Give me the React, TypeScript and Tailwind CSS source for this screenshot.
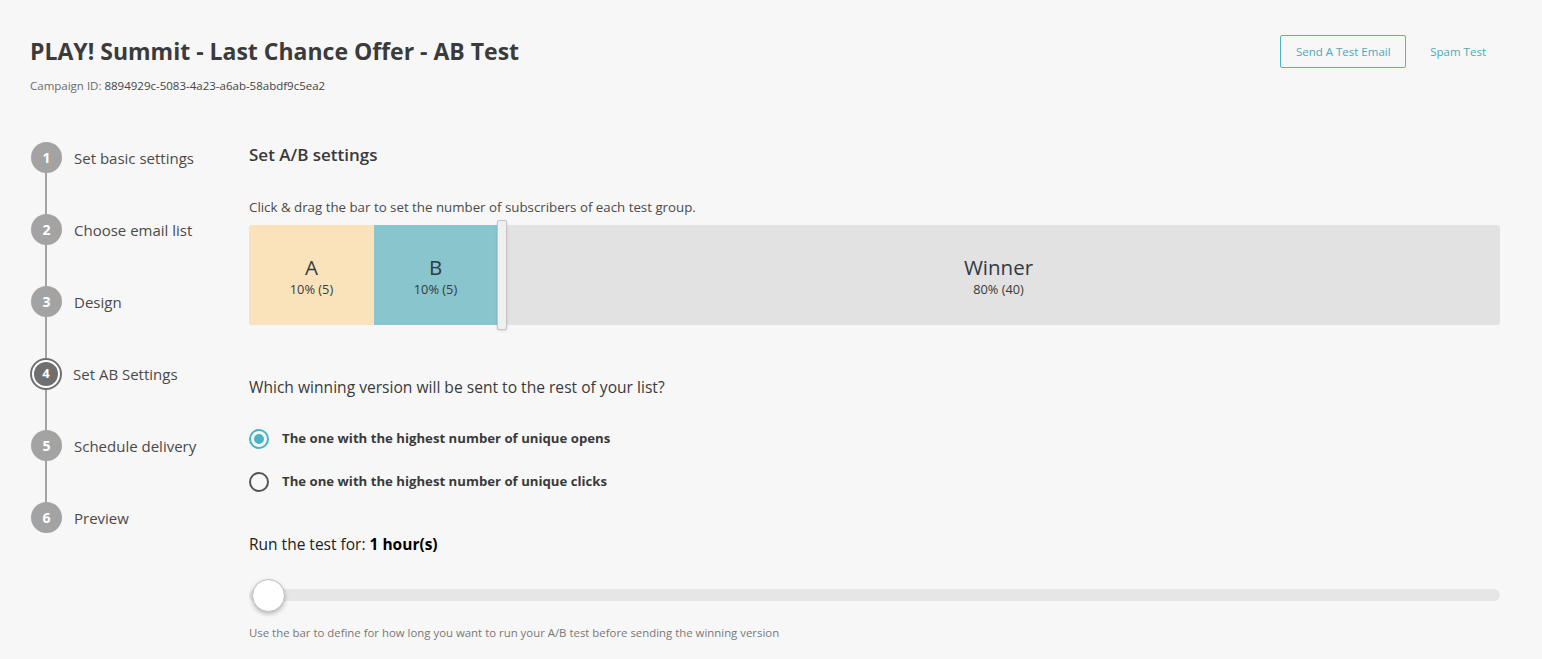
import React from 'react';

const steps = [
    { n: 1, label: 'Set basic settings' },
    { n: 2, label: 'Choose email list' },
    { n: 3, label: 'Design' },
    { n: 4, label: 'Set AB Settings', active: true },
    { n: 5, label: 'Schedule delivery' },
    { n: 6, label: 'Preview' },
];

const Stepper: React.FC = () => {
    return (
        <div className="relative w-[249px] shrink-0 pl-[31px] pt-[48px]">
            {/* vertical line */}
            <div className="absolute left-[45px] top-[71px] h-[358px] w-[2px] bg-[#a3a3a3]" />
            <div className="flex flex-col gap-[41px]">
                {steps.map(s => (
                    <div key={s.n} className="relative flex items-center h-[31px]">
                        {s.active ? (
                            <div className="w-[32px] h-[32px] -ml-[1px] rounded-full border-2 border-[#707070] bg-white flex items-center justify-center">
                                <div className="w-[24px] h-[24px] rounded-full bg-[#6f6f6f] flex items-center justify-center text-white text-[13px] font-bold">
                                    {s.n}
                                </div>
                            </div>
                        ) : (
                            <div className="w-[31px] h-[31px] rounded-full bg-[#a3a3a3] flex items-center justify-center text-white text-[14px] font-bold">
                                {s.n}
                            </div>
                        )}
                        <span className={`text-[15px] text-[#4a4a4a] ${s.active ? 'ml-[11px]' : 'ml-[12px]'}`}>{s.label}</span>
                    </div>
                ))}
            </div>
        </div>
    );
};

export default function App() {
    return (
        <div
            className="min-h-[659px] bg-[#f7f7f7] text-[#333]"
            style={{ fontFamily: '"Open Sans", "Noto Sans", sans-serif' }}
        >
            {/* Header */}
            <div className="flex justify-between items-start pl-[30px] pr-[56px] pt-[34px]">
                <div>
                    <h1 className="text-[23px] font-bold text-[#3b3b3b] leading-[34px]">
                        PLAY! Summit - Last Chance Offer - AB Test
                    </h1>
                    <p className="mt-[9px] text-[11.5px] text-[#6b6b6b]">
                        Campaign ID: <span className="text-[#444]">8894929c-5083-4a23-a6ab-58abdf9c5ea2</span>
                    </p>
                </div>
                <div className="flex items-center gap-[24px] mt-[1px]">
                    <button className="h-[33px] w-[126px] border border-[#4fb6c6] rounded-[2px] text-[11.5px] text-[#4aaabb]">
                        Send A Test Email
                    </button>
                    <span className="text-[11.5px] text-[#4aaabb]">Spam Test</span>
                </div>
            </div>

            <div className="flex">
                <Stepper />

                {/* Main */}
                <div className="flex-1 pr-[42px] pt-[48px]">
                    <h2 className="text-[17px] font-semibold text-[#3a3a3a]">Set A/B settings</h2>

                    <p className="mt-[30px] text-[13.3px] text-[#4a4a4a]">
                        Click &amp; drag the bar to set the number of subscribers of each test group.
                    </p>

                    <div className="relative mt-[7px] flex h-[100px] rounded-[3px] bg-[#e2e2e2]">
                        <div className="w-[125px] rounded-l-[3px] bg-[#fae3bb] flex flex-col items-center justify-center pt-[4px]">
                            <span className="text-[20.5px] font-medium text-[#2f3a45] leading-[26px]">A</span>
                            <span className="text-[12.8px] text-[#3a3a3a]">10% (5)</span>
                        </div>
                        <div className="w-[123px] bg-[#89c5cc] flex flex-col items-center justify-center pt-[4px]">
                            <span className="text-[20.5px] font-medium text-[#2f3a45] leading-[26px]">B</span>
                            <span className="text-[12.8px] text-[#3a3a3a]">10% (5)</span>
                        </div>
                        <div className="absolute left-[248px] -top-[5px] w-[10px] h-[110px] bg-[#f0f0f0] border border-[#c4c4c4] rounded-[2px] shadow-sm" />
                        <div className="flex-1 flex flex-col items-center justify-center pt-[4px]">
                            <span className="text-[20.5px] font-medium text-[#2f3a45] leading-[26px]">Winner</span>
                            <span className="text-[12.8px] text-[#3a3a3a]">80% (40)</span>
                        </div>
                    </div>

                    <p className="mt-[51px] text-[15.6px] text-[#3a3a3a]">
                        Which winning version will be sent to the rest of your list?
                    </p>

                    <div className="mt-[30px] flex flex-col gap-[23px]">
                        <label className="flex items-center gap-[13px]">
                            <span className="w-[20px] h-[20px] rounded-full border-2 border-[#4ab3c4] flex items-center justify-center">
                                <span className="w-[10px] h-[10px] rounded-full bg-[#4ab3c4]" />
                            </span>
                            <span className="text-[13.2px] font-bold text-[#3a3a3a]">The one with the highest number of unique opens</span>
                        </label>
                        <label className="flex items-center gap-[13px]">
                            <span className="w-[20px] h-[20px] rounded-full border-2 border-[#555]" />
                            <span className="text-[13.2px] font-bold text-[#3a3a3a]">The one with the highest number of unique clicks</span>
                        </label>
                    </div>

                    <p className="mt-[41px] text-[15.5px] text-[#222]">
                        Run the test for: <span className="font-bold text-black">1 hour(s)</span>
                    </p>

                    <div className="relative mt-[23px] h-[32px] flex items-center">
                        <div className="w-full h-[12px] rounded-full bg-[#e6e6e6]" />
                        <div className="absolute left-[3px] top-0 w-[33px] h-[33px] rounded-full bg-white border border-[#bdbdbd] shadow-[0_2px_4px_rgba(0,0,0,0.25)]" />
                    </div>

                    <p className="mt-[13px] text-[11.4px] text-[#777]">
                        Use the bar to define for how long you want to run your A/B test before sending the winning version
                    </p>
                </div>
            </div>
        </div>
    );
}
